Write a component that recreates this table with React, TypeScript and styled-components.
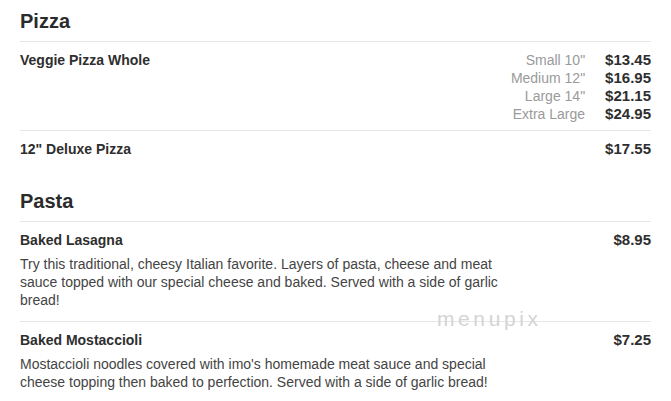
import React from "react";
import styled, { createGlobalStyle } from "styled-components";

const GlobalStyle = createGlobalStyle`
  html, body { margin: 0; padding: 0; background: #fff; }
  body { font-family: "Liberation Sans", Arial, sans-serif; color: #333; }
`;

const Page = styled.div`
  position: relative;
  padding: 9px 20px 0 20px;
  width: 631px;
`;

const Section = styled.section`
  margin-bottom: 31px;
`;

const SectionTitle = styled.h2`
  margin: 0;
  font-size: 20px;
  line-height: 24px;
  font-weight: 700;
  color: #2b2b2b;
  padding-bottom: 8px;
  border-bottom: 1px solid #e6e6e6;
`;

const Item = styled.div<{ $last?: boolean }>`
  padding: 9px 0 ${(p) => (p.$last ? "0" : "7px")} 0;
  border-bottom: ${(p) => (p.$last ? "none" : "1px solid #e6e6e6")};
`;

const ItemTop = styled.div`
  display: flex;
  justify-content: space-between;
  align-items: flex-start;
`;

const Name = styled.div`
  font-size: 14px;
  line-height: 18px;
  font-weight: 700;
  color: #2e2e2e;
`;

const Prices = styled.div`
  display: grid;
  grid-template-columns: auto auto;
  column-gap: 20px;
  justify-items: end;
`;

const SizeLabel = styled.div`
  font-size: 14px;
  line-height: 18px;
  color: #9a9a9a;
`;

const Price = styled.div`
  font-size: 15px;
  line-height: 18px;
  font-weight: 700;
  color: #2e2e2e;
`;

const Desc = styled.p`
  margin: 6px 0 5px 0;
  width: 500px;
  font-size: 14px;
  line-height: 18px;
  color: #444;
`;

const Watermark = styled.div`
  position: absolute;
  left: 437px;
  top: 308px;
  font-family: "Liberation Sans", Arial, sans-serif;
  font-size: 21px;
  line-height: 21px;
  font-weight: 300;
  letter-spacing: 3.6px;
  color: #d4d4d4;
  pointer-events: none;
`;

type Size = { label: string; price: string };

const pizza = [
  {
    name: "Veggie Pizza Whole",
    sizes: [
      { label: 'Small 10"', price: "$13.45" },
      { label: 'Medium 12"', price: "$16.95" },
      { label: 'Large 14"', price: "$21.15" },
      { label: "Extra Large", price: "$24.95" },
    ] as Size[],
  },
  { name: '12" Deluxe Pizza', sizes: [{ label: "", price: "$17.55" }] as Size[] },
];

const pasta = [
  {
    name: "Baked Lasagna",
    price: "$8.95",
    desc: "Try this traditional, cheesy Italian favorite. Layers of pasta, cheese and meat sauce topped with our special cheese and baked. Served with a side of garlic bread!",
  },
  {
    name: "Baked Mostaccioli",
    price: "$7.25",
    desc: "Mostaccioli noodles covered with imo's homemade meat sauce and special cheese topping then baked to perfection. Served with a side of garlic bread!",
  },
];

export default function App() {
  return (
    <>
      <GlobalStyle />
      <Page>
        <Section>
          <SectionTitle>Pizza</SectionTitle>
          {pizza.map((it, i) => (
            <Item key={it.name} $last={i === pizza.length - 1}>
              <ItemTop>
                <Name>{it.name}</Name>
                <Prices>
                  {it.sizes.map((s) => (
                    <React.Fragment key={s.price}>
                      <SizeLabel>{s.label}</SizeLabel>
                      <Price>{s.price}</Price>
                    </React.Fragment>
                  ))}
                </Prices>
              </ItemTop>
            </Item>
          ))}
        </Section>
        <Section>
          <SectionTitle>Pasta</SectionTitle>
          {pasta.map((it, i) => (
            <Item key={it.name} $last={i === pasta.length - 1}>
              <ItemTop>
                <Name>{it.name}</Name>
                <Price>{it.price}</Price>
              </ItemTop>
              <Desc>{it.desc}</Desc>
            </Item>
          ))}
        </Section>
        <Watermark>menupix</Watermark>
      </Page>
    </>
  );
}
